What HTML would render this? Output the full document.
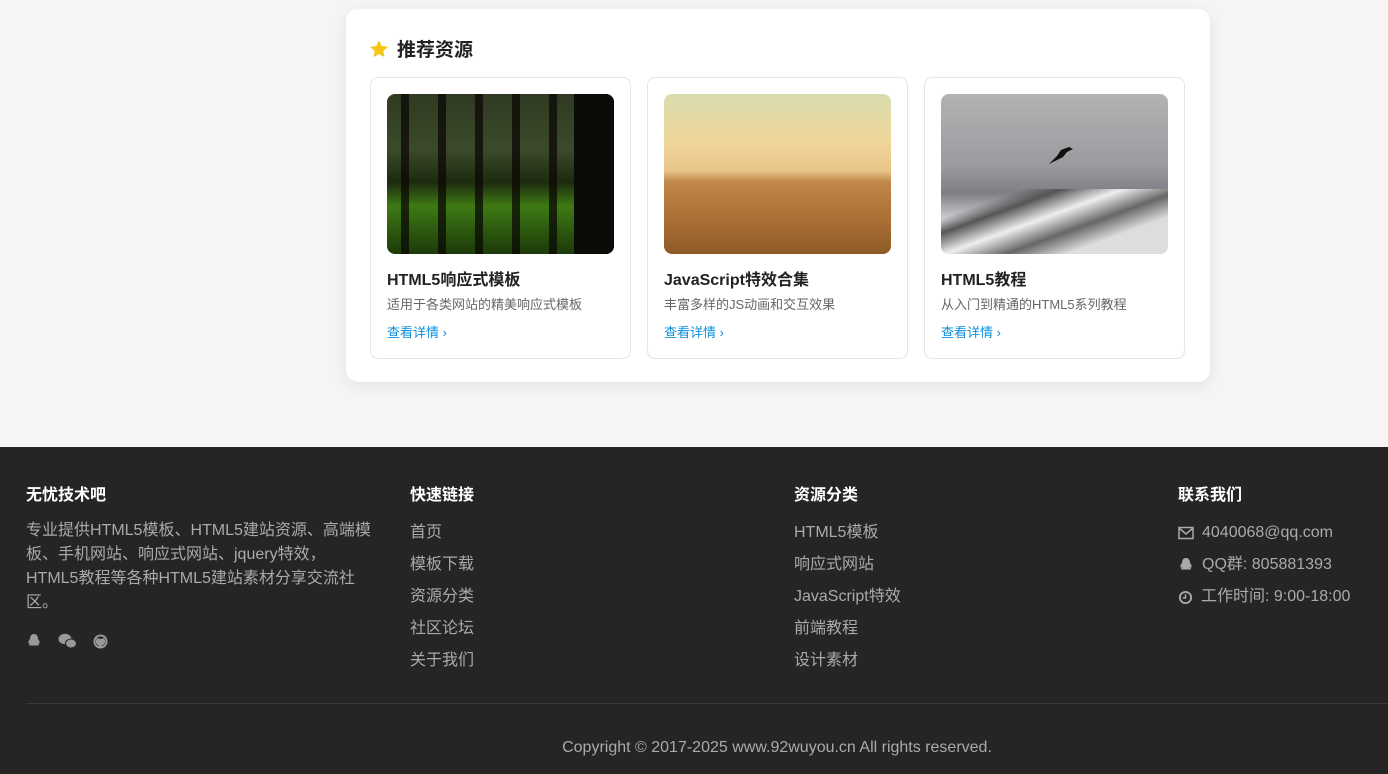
<!DOCTYPE html>
<html><head><meta charset="utf-8"><style>
*{margin:0;padding:0;box-sizing:border-box}
body{width:1388px;height:774px;background:#f5f5f5;font-family:"Liberation Sans","Noto Sans CJK SC",sans-serif;position:relative;overflow:hidden}
.card{position:absolute;left:346px;top:9px;width:864px;height:373px;background:#fff;border-radius:12px;box-shadow:0 4px 16px rgba(0,0,0,.08)}
.h{position:absolute;left:23px;top:26px;font-size:19px;font-weight:bold;color:#222;display:flex;align-items:center;gap:8px}
.it{position:absolute;top:68px;width:261px;height:282px;border:1px solid #e5e5e5;border-radius:8px}
.img{position:absolute;left:16px;top:16px;width:227px;height:160px;border-radius:8px;overflow:hidden}
.t{position:absolute;left:16px;top:188px;font-size:16px;font-weight:bold;color:#222}
.d{position:absolute;left:16px;top:216px;font-size:13px;color:#666}
.l{position:absolute;left:16px;top:244px;font-size:13px;color:#0a8fdc}
.f{position:absolute;left:0;top:447px;width:1388px;height:327px;background:#252525;color:#aaa}
.c{position:absolute;top:34px}
.c h4{color:#fff;font-size:16px;font-weight:bold;margin-bottom:18px}
.c a{display:block;font-size:16px;line-height:32px;margin-top:-6px;margin-bottom:6px}
.c p{font-size:16px;line-height:24px;margin-top:-4px}
.ct{font-size:16px;line-height:32px;display:flex;align-items:center;gap:8px;margin-top:-6px;margin-bottom:6px}
</style></head><body>
<div class="card">
<div class="h"><svg width="20" height="20" viewBox="0 0 24 24"><path fill="#f5c518" d="M12 1.5l3.2 6.9 7.5.9-5.6 5.1 1.5 7.4L12 18l-6.6 3.8 1.5-7.4L1.3 9.3l7.5-.9z"/></svg>推荐资源</div>
<div class="it" style="left:24px"><div class="img" style="background:linear-gradient(180deg,#2f3a22 0%,#3b4a2a 35%,#1c2a10 55%,#3e7a14 70%,#1d3a0a 100%)"><div style="position:absolute;inset:0;background:repeating-linear-gradient(90deg,transparent 0 14px,rgba(10,8,4,.75) 14px 22px,transparent 22px 37px)"></div><div style="position:absolute;right:0;top:0;width:40px;height:160px;background:#0b0b08"></div></div>
<div class="t">HTML5响应式模板</div><div class="d">适用于各类网站的精美响应式模板</div><div class="l">查看详情 ›</div></div>
<div class="it" style="left:301px"><div class="img" style="background:linear-gradient(180deg,#d9dcae 0%,#f0d69a 30%,#e8c488 48%,#c08848 55%,#a86e34 80%,#8e5a26 100%)"></div>
<div class="t">JavaScript特效合集</div><div class="d">丰富多样的JS动画和交互效果</div><div class="l">查看详情 ›</div></div>
<div class="it" style="left:578px"><div class="img" style="background:linear-gradient(180deg,#b3b3b5 0%,#9b9b9f 45%,#7e7f84 62%,#d6d8dc 80%,#c8c9cc 100%)"><div style="position:absolute;left:0;top:95px;width:227px;height:65px;background:linear-gradient(160deg,transparent 20%,#555 30%,#eee 45%,#666 60%,#ddd 75%)"></div><svg style="position:absolute;left:106px;top:52px" width="28" height="20" viewBox="0 0 28 20"><path fill="#111" d="M2 18L10 10 14 4 22 1 26 3 20 6 16 11 8 15z"/></svg></div>
<div class="t">HTML5教程</div><div class="d">从入门到精通的HTML5系列教程</div><div class="l">查看详情 ›</div></div>
</div>
<div class="f">
<div class="c" style="left:26px;width:352px"><h4>无忧技术吧</h4><p>专业提供HTML5模板、HTML5建站资源、高端模板、手机网站、响应式网站、jquery特效，<br>HTML5教程等各种HTML5建站素材分享交流社区。</p>
<div style="margin-top:18px;display:flex;gap:16px;align-items:center">
<svg width="16" height="16" viewBox="0 0 16 16"><path fill="#999" d="M8 1c3 0 4 2.5 4 5 1 1 2 3 1.5 4.5-.5.3-1-.5-1.3-.5.3 1 1.3 2 .3 2.5H3.5c-1-.5 0-1.5.3-2.5-.3 0-.8.8-1.3.5C2 9 3 7 4 6c0-2.5 1-5 4-5z"/></svg>
<svg width="19" height="16" viewBox="0 0 19 16"><ellipse cx="7" cy="6" rx="6.5" ry="5.2" fill="#999"/><ellipse cx="13" cy="10.5" rx="5.5" ry="4.5" fill="#999" stroke="#252525" stroke-width="1"/></svg>
<svg width="15" height="15" viewBox="0 0 16 16"><circle cx="8" cy="8" r="6.5" fill="none" stroke="#999" stroke-width="2"/><path d="M6 15v-3c-2-.5-3-2-3-4 0-1 .5-2 1-2.5V4l2 1h4l2-1v1.5c.5.5 1 1.5 1 2.5 0 2-1 3.5-3 4v3z" fill="#999"/></svg></div></div>
<div class="c" style="left:410px"><h4>快速链接</h4><a>首页</a><a>模板下载</a><a>资源分类</a><a>社区论坛</a><a>关于我们</a></div>
<div class="c" style="left:794px"><h4>资源分类</h4><a>HTML5模板</a><a>响应式网站</a><a>JavaScript特效</a><a>前端教程</a><a>设计素材</a></div>
<div class="c" style="left:1178px"><h4>联系我们</h4>
<div class="ct"><svg width="16" height="14" viewBox="0 0 16 14"><rect x="1" y="1.5" width="14" height="11" fill="none" stroke="#aaa" stroke-width="1.5"/><path d="M1 2l7 6 7-6" fill="none" stroke="#aaa" stroke-width="1.5"/></svg>4040068@qq.com</div>
<div class="ct"><svg width="16" height="16" viewBox="0 0 16 16"><path fill="#aaa" d="M8 1c3 0 4 2.5 4 5 1 1 2 3 1.5 4.5-.5.3-1-.5-1.3-.5.3 1 1.3 2 .3 2.5H3.5c-1-.5 0-1.5.3-2.5-.3 0-.8.8-1.3.5C2 9 3 7 4 6c0-2.5 1-5 4-5z"/></svg>QQ群: 805881393</div>
<div class="ct"><svg width="15" height="15" viewBox="0 0 16 16"><circle cx="8" cy="8" r="6" fill="none" stroke="#aaa" stroke-width="2"/><path d="M8 4.5V8.5H5" fill="none" stroke="#aaa" stroke-width="1.6"/></svg>工作时间: 9:00-18:00</div></div>
<div style="position:absolute;left:26px;top:256px;width:1362px;height:1px;background:#3a3a3a"></div>
<div style="position:absolute;left:0;width:1554px;top:292px;text-align:center;font-size:16px;color:#aaa">Copyright © 2017-2025 www.92wuyou.cn All rights reserved.</div>
</div>
</body></html>
